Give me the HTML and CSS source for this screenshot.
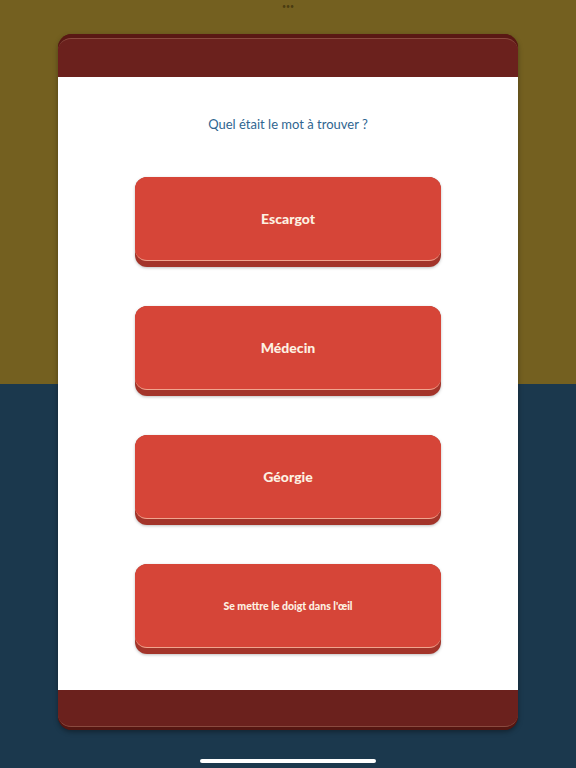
FILE: index.html
```html
<!DOCTYPE html>
<html lang="fr">
<head>
<meta charset="utf-8">
<link rel="stylesheet" href="styles.css">
</head>
<body>
<div class="screen">
  <div class="dots">•••</div>
  <div class="card">
    <div class="card-top"><div class="card-top-face"></div></div>
    <div class="card-body">
      <p class="question">Quel était le mot à trouver ?</p>
      <div class="answers">
        <button class="answer"><span class="answer-face">Escargot</span></button>
        <button class="answer"><span class="answer-face">Médecin</span></button>
        <button class="answer"><span class="answer-face">Géorgie</span></button>
        <button class="answer"><span class="answer-face small">Se mettre le doigt dans l'œil</span></button>
      </div>
    </div>
    <div class="card-bottom"><div class="card-bottom-face"></div></div>
  </div>
  <div class="home-bar"></div>
</div>
</body>
</html>
```
FILE: styles.css
```css
html, body {
  margin: 0;
  padding: 0;
}
body {
  width: 576px;
  height: 768px;
  overflow: hidden;
  background: linear-gradient(to bottom, #746020 0, #746020 384px, #1b384d 384px, #1b384d 100%);
  font-family: Lato, "Noto Sans", sans-serif;
}
.screen {
  position: relative;
  height: 768px;
  padding: 34px 58px 0;
  box-sizing: border-box;
}
.dots {
  position: absolute;
  top: 1px;
  left: 0;
  right: 0;
  text-align: center;
  font-size: 7px;
  color: #4a3c10;
  line-height: 10px;
}
.card {
  border-radius: 14px;
  background: #5a1814;
  box-shadow: 0 2px 5px rgba(0,0,0,0.35);
  overflow: hidden;
}
.card-top {
  height: 43px;
  padding-top: 4px;
  box-sizing: border-box;
  background: #5a1814;
}
.card-top-face {
  height: 39px;
  border-radius: 13px 13px 0 0;
  background: #6b211d;
  border-top: 1px solid #8a4a3f;
  box-sizing: border-box;
}
.card-body {
  background: #ffffff;
  height: 613px;
  display: flex;
  flex-direction: column;
  align-items: center;
  padding-top: 38px;
  box-sizing: border-box;
}
.question {
  margin: 0;
  font-size: 13px;
  line-height: 18px;
  color: #2f6590;
}
.answers {
  margin-top: 44px;
  display: flex;
  flex-direction: column;
  gap: 39px;
}
.answer {
  display: block;
  width: 306px;
  height: 90px;
  padding: 0 0 6px;
  margin: 0;
  border: 0;
  border-radius: 12px;
  background: #a3342a;
  box-shadow: 0 1px 3px rgba(0,0,0,0.25);
  font-family: inherit;
  cursor: pointer;
}
.answer-face {
  display: flex;
  align-items: center;
  justify-content: center;
  height: 84px;
  border-radius: 12px;
  background: #d64538;
  border-bottom: 1px solid #f0a58f;
  box-sizing: border-box;
  color: #fdf1e2;
  font-weight: 900;
  font-size: 14px;
}
.answer-face.small {
  font-size: 10.5px;
}
.card-bottom {
  height: 40px;
  background: #551611;
}
.card-bottom-face {
  height: 37px;
  border-radius: 0 0 13px 13px;
  background: #6b211d;
  border-bottom: 1px solid #8a4a3f;
  box-sizing: border-box;
}
.home-bar {
  position: absolute;
  left: 200px;
  bottom: 5px;
  width: 176px;
  height: 4px;
  border-radius: 2px;
  background: #ffffff;
}
```
